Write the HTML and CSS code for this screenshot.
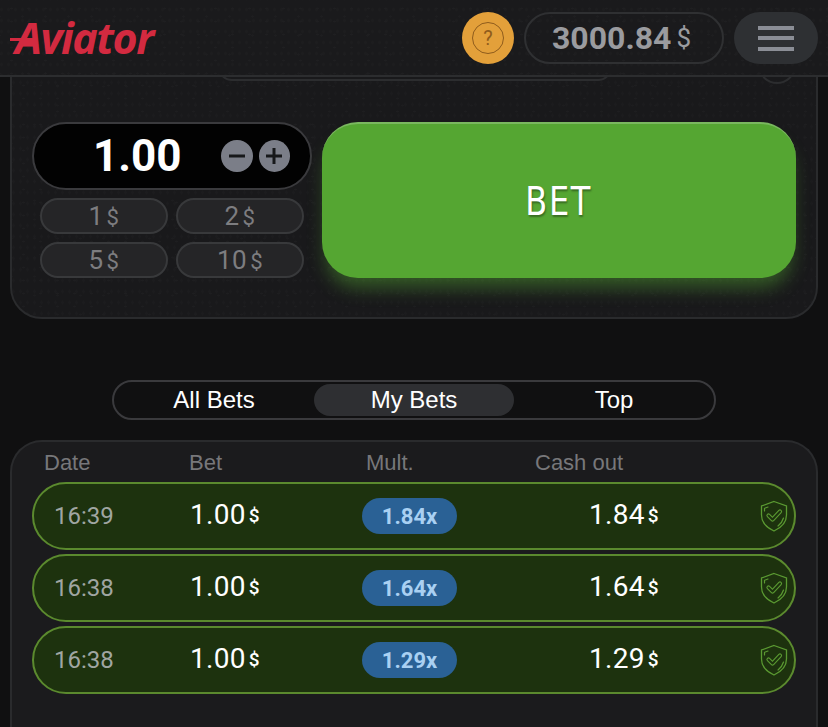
FILE: index.html
```html
<!DOCTYPE html>
<html lang="en">
  <head>
    <meta charset="UTF-8" />
    <meta name="viewport" content="width=device-width, initial-scale=1.0" />
    <title>Aviator</title>
    <link rel="stylesheet" href="styles.css">
  </head>
  <body>
    <svg class="defs" width="0" height="0">
      <symbol id="shield" viewBox="0 0 28 32">
        <path d="M14 1.500 L26.500 6 V15 C26.500 23 20.500 28 14 31 C7.500 28 1.500 23 1.500 15 V6 Z" fill="none" stroke="currentColor" stroke-width="1.300" />
        <path d="M4.500 11 V8.300 L8 7 M23.500 18 C22.500 21.500 20.500 24 18 26" fill="none" stroke="currentColor" stroke-width="1.200" stroke-linecap="round" />
        <path d="M8.500 15.500 L12.500 19.500 L20 11.500" fill="none" stroke="currentColor" stroke-width="4.200" stroke-linejoin="round" stroke-linecap="round" />
        <path d="M8.500 15.500 L12.500 19.500 L20 11.500" fill="none" stroke="#1d320e" stroke-width="2" stroke-linejoin="round" stroke-linecap="round" />
      </symbol>
    </svg>

    <header class="topbar">
      <div class="logo">Aviator</div>
      <div class="help">
        <span class="help-ring">?</span>
      </div>
      <div class="balance">3000.84<span class="balance-cur">$</span></div>
      <button class="menu">
        <span></span>
        <span></span>
        <span></span>
      </button>
    </header>

    <!-- Bet panel, its top is scrolled under the header -->
    <section class="bet-panel">
      <div class="panel-top">
        <div class="hidden-pill"></div>
        <div class="hidden-circle"></div>
      </div>
      <div class="bet-row">
        <div class="bet-controls">
          <div class="amount">
            <span class="amount-value">1.00</span>
            <button class="round-btn">
              <svg width="18" height="18" viewBox="0 0 18 18"><path d="M1 9 H17" stroke="#17181a" stroke-width="3" /></svg>
            </button>
            <button class="round-btn">
              <svg width="18" height="18" viewBox="0 0 18 18"><path d="M1 9 H17 M9 1 V17" stroke="#17181a" stroke-width="3" /></svg>
            </button>
          </div>
          <div class="quick-grid">
            <button class="quick">1<span class="cur">$</span></button>
            <button class="quick">2<span class="cur">$</span></button>
            <button class="quick">5<span class="cur">$</span></button>
            <button class="quick">10<span class="cur">$</span></button>
          </div>
        </div>
        <button class="bet-btn"><span class="bet-label">BET</span></button>
      </div>
    </section>

    <nav class="tabs">
      <div class="tab">All Bets</div>
      <div class="tab tab-active">My Bets</div>
      <div class="tab">Top</div>
    </nav>

    <section class="bets">
      <div class="bets-head">
        <span>Date</span>
        <span>Bet</span>
        <span>Mult.</span>
        <span>Cash out</span>
      </div>
      <div class="bet-item">
        <span class="time">16:39</span>
        <span class="money">1.00<span class="cur">$</span></span>
        <span class="mult">1.84x</span>
        <span class="money">1.84<span class="cur">$</span></span>
        <svg class="shield" width="28" height="32"><use href="#shield" /></svg>
      </div>
      <div class="bet-item">
        <span class="time">16:38</span>
        <span class="money">1.00<span class="cur">$</span></span>
        <span class="mult">1.64x</span>
        <span class="money">1.64<span class="cur">$</span></span>
        <svg class="shield" width="28" height="32"><use href="#shield" /></svg>
      </div>
      <div class="bet-item">
        <span class="time">16:38</span>
        <span class="money">1.00<span class="cur">$</span></span>
        <span class="mult">1.29x</span>
        <span class="money">1.29<span class="cur">$</span></span>
        <svg class="shield" width="28" height="32"><use href="#shield" /></svg>
      </div>
    </section>
  </body>
</html>
```

FILE: styles.css
```css
* {
  box-sizing: border-box;
}
html,
body {
  height: 727px;
  overflow: hidden;
}
body {
  margin: 0;
  background-color: #101011;
  font-family: Roboto, "Liberation Sans", sans-serif;
  color: #fff;
}
button {
  font-family: inherit;
  padding: 0;
  cursor: pointer;
}
.defs {
  position: absolute;
}

/* Header */
.topbar {
  position: relative;
  z-index: 2;
  height: 77px;
  display: flex;
  align-items: flex-start;
  padding: 12px 10px 0;
  border-bottom: 2px solid #2c2d2f;
  background-color: #1a1a1c;
  background-image: radial-gradient(#1f1f21 1px, transparent 1.5px),
    radial-gradient(#1e1e20 1px, transparent 1.5px),
    radial-gradient(#1d1d1f 1px, transparent 1.5px);
  background-size: 17px 13px, 23px 19px, 7px 11px;
  background-position: 3px 2px, 11px 7px, 5px 4px;
}
.logo {
  position: relative;
  width: 143px;
  height: 44px;
  margin-right: 309px;
  padding-left: 5px;
  font-family: "Open Sans", sans-serif;
  font-size: 43px;
  font-weight: 700;
  font-style: italic;
  line-height: 52px;
  letter-spacing: -1.500px;
  color: #d32a40;
}
/* swash of the A */
.logo::before {
  content: "";
  position: absolute;
  left: 0;
  top: 26px;
  width: 26px;
  height: 3px;
  background-color: #d32a40;
}
.help {
  width: 52px;
  height: 52px;
  margin-right: 10px;
  display: flex;
  align-items: center;
  justify-content: center;
  border-radius: 50%;
  background-color: #e3a03a;
}
.help-ring {
  width: 32px;
  height: 32px;
  display: flex;
  align-items: center;
  justify-content: center;
  border: 1px solid #8f5c1c;
  border-radius: 50%;
  font-size: 20px;
  color: #8f5c1c;
}
.balance {
  width: 200px;
  height: 52px;
  margin-right: 10px;
  padding-right: 5px;
  display: flex;
  align-items: center;
  justify-content: center;
  border: 2px solid #2f3032;
  border-radius: 26px;
  font-size: 32px;
  font-weight: 700;
  color: #9a9b9f;
}
.balance-cur {
  margin-left: 5px;
  font-size: 26px;
  font-weight: 400;
}
.menu {
  width: 84px;
  height: 52px;
  display: flex;
  flex-direction: column;
  align-items: center;
  justify-content: center;
  gap: 6.500px;
  border: none;
  border-radius: 26px;
  background-color: #2e3033;
}
.menu span {
  width: 36px;
  height: 4px;
  background-color: #8b8e96;
}

/* Bet panel */
.bet-panel {
  height: 270px;
  margin: -28px 10px 0;
  padding: 0 20px;
  border: 2px solid #2a2b2d;
  border-radius: 0 0 32px 32px;
  background-color: #19191b;
  background-image: radial-gradient(#1e1e20 1px, transparent 1.5px),
    radial-gradient(#1d1d1f 1px, transparent 1.5px),
    radial-gradient(#1c1c1e 1px, transparent 1.5px);
  background-size: 17px 13px, 23px 19px, 7px 11px;
  background-position: 3px 2px, 11px 7px, 5px 4px;
}
.panel-top {
  height: 71px;
  display: flex;
  align-items: flex-start;
  padding-left: 186px;
}
.hidden-pill {
  width: 394px;
  height: 30px;
  border: 2px solid #2c2d2f;
  border-radius: 0 0 14px 14px;
}
.hidden-circle {
  width: 36px;
  height: 33px;
  margin-left: 147px;
  border: 2px solid #2c2d2f;
  border-radius: 50%;
}
.bet-row {
  display: flex;
  gap: 10px;
}
.bet-controls {
  width: 280px;
}
.amount {
  height: 68px;
  display: flex;
  align-items: center;
  gap: 6px;
  padding: 0 20px 0 59px;
  border: 2px solid #3a3a3d;
  border-radius: 34px;
  background-color: #020202;
}
.amount-value {
  width: 125px;
  font-size: 44px;
  font-weight: 700;
}
.round-btn {
  width: 32px;
  height: 32px;
  display: flex;
  align-items: center;
  justify-content: center;
  border: none;
  border-radius: 50%;
  background-color: #7b7e88;
}
.quick-grid {
  display: grid;
  grid-template-columns: 128px 128px;
  gap: 8px;
  margin-top: 8px;
  padding-left: 8px;
}
.quick {
  height: 36px;
  border: 2px solid #38393b;
  border-radius: 18px;
  background-color: #252527;
  font-size: 26px;
  letter-spacing: 0.5px;
  color: #7d7d80;
}
.cur {
  margin-left: 3px;
  font-size: 0.85em;
}
.bet-btn {
  width: 474px;
  height: 156px;
  border: none;
  border-top: 2px solid #7ab85f;
  border-radius: 36px;
  background-color: #55a632;
  box-shadow: 0 14px 18px -4px rgba(85, 166, 50, 0.45);
  font-family: "DejaVu Sans", sans-serif;
  font-size: 39px;
  letter-spacing: 2px;
  color: #fff;
  text-shadow: 1px 2px 2px rgba(0, 0, 0, 0.35);
}
.bet-label {
  display: inline-block;
  transform: scaleX(0.82);
}

/* Tabs */
.tabs {
  width: 604px;
  height: 40px;
  margin: 61px auto 0;
  display: grid;
  grid-template-columns: repeat(3, 1fr);
  padding: 2px 0;
  border: 2px solid #3a3a3d;
  border-radius: 20px;
  font-family: "Liberation Sans", sans-serif;
  font-size: 24px;
}
.tab {
  display: flex;
  align-items: center;
  justify-content: center;
  border-radius: 18px;
}
.tab-active {
  background-color: #2e2f32;
}

/* My bets list */
.bets {
  height: 300px;
  margin: 20px 10px 0;
  padding: 0 20px;
  border: 2px solid #2a2b2d;
  border-bottom: none;
  border-radius: 32px 32px 0 0;
  background-color: #1b1b1d;
}
.bets-head {
  height: 40px;
  display: grid;
  grid-template-columns: 145px 177px 169px auto;
  padding: 8px 0 0 12px;
  font-family: "Liberation Sans", sans-serif;
  font-size: 22px;
  color: #77777a;
}
.bet-item {
  height: 68px;
  margin-bottom: 4px;
  display: grid;
  grid-template-columns: 136px 172px 227px 171px auto;
  align-items: center;
  padding-left: 20px;
  border: 2px solid #5b8a2e;
  border-radius: 34px;
  background-color: #1d320e;
}
.time {
  font-size: 24px;
  color: #a0a6a2;
}
.money {
  font-size: 28px;
  letter-spacing: 0.3px;
  line-height: 30px;
}
.money .cur {
  display: inline-block;
  margin-left: 3px;
  font-size: 19px;
  font-weight: 500;
  transform: translateY(-2px);
}
.mult {
  width: 95px;
  height: 36px;
  display: flex;
  align-items: center;
  justify-content: center;
  border-radius: 18px;
  background-color: #2a6195;
  font-size: 22px;
  font-weight: 700;
  color: #a9d0f2;
}
.shield {
  color: #5b9a32;
}
```
